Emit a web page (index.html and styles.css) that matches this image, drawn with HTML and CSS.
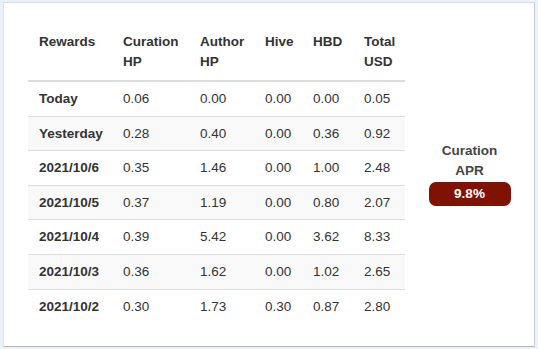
FILE: index.html
```html
<!DOCTYPE html>
<html>
<head>
<meta charset="utf-8">
<link rel="stylesheet" href="styles.css">
</head>
<body>
<div class="card">
  <div class="row">
    <table class="rewards">
      <colgroup>
        <col class="c1"><col class="c2"><col class="c3"><col class="c4"><col class="c5"><col class="c6">
      </colgroup>
      <thead>
        <tr><th>Rewards</th><th>Curation HP</th><th>Author HP</th><th>Hive</th><th>HBD</th><th>Total USD</th></tr>
      </thead>
      <tbody>
        <tr><th>Today</th><td>0.06</td><td>0.00</td><td>0.00</td><td>0.00</td><td>0.05</td></tr>
        <tr><th>Yesterday</th><td>0.28</td><td>0.40</td><td>0.00</td><td>0.36</td><td>0.92</td></tr>
        <tr><th>2021/10/6</th><td>0.35</td><td>1.46</td><td>0.00</td><td>1.00</td><td>2.48</td></tr>
        <tr><th>2021/10/5</th><td>0.37</td><td>1.19</td><td>0.00</td><td>0.80</td><td>2.07</td></tr>
        <tr><th>2021/10/4</th><td>0.39</td><td>5.42</td><td>0.00</td><td>3.62</td><td>8.33</td></tr>
        <tr><th>2021/10/3</th><td>0.36</td><td>1.62</td><td>0.00</td><td>1.02</td><td>2.65</td></tr>
        <tr><th>2021/10/2</th><td>0.30</td><td>1.73</td><td>0.30</td><td>0.87</td><td>2.80</td></tr>
      </tbody>
    </table>
    <div class="apr">
      <div class="apr-label">Curation<br>APR</div>
      <div class="apr-badge">9.8%</div>
    </div>
  </div>
</div>
</body>
</html>
```

FILE: styles.css
```css
html, body {
  margin: 0;
  padding: 0;
  background: #eaf1f9;
}
body {
  padding: 2px 0 0 3px;
  font-family: "Liberation Sans", Arial, sans-serif;
  font-size: 13.5px;
  color: #333;
}
.card {
  box-sizing: border-box;
  width: 532px;
  height: 345px;
  background: #fff;
  border-top: 1px solid #d6dde5;
  border-left: 1px solid #e6e0e0;
  border-right: 1px solid #c9ced4;
  border-bottom: 1px solid #b5b5b5;
  padding: 21px 0 0 24px;
}
.row {
  display: flex;
  align-items: center;
}
.rewards {
  width: 377px;
  flex: none;
  table-layout: fixed;
  border-collapse: collapse;
  border-spacing: 0;
}
.c1 { width: 84px; }
.c2 { width: 77px; }
.c3 { width: 65px; }
.c4 { width: 48px; }
.c5 { width: 51px; }
.c6 { width: 52px; }
.rewards th, .rewards td {
  text-align: left;
  padding: 7px 0 7px 11px;
  line-height: 19.6px;
  vertical-align: middle;
}
.rewards th { font-weight: bold; }
.rewards thead th {
  line-height: 20px;
  padding: 8px 0 8px 11px;
  vertical-align: top;
  border-bottom: 2px solid #ddd;
}
.rewards tbody tr { border-top: 1px solid #ddd; }
.rewards tbody tr:first-child { border-top: 0; }
.rewards tbody tr:nth-child(even) { background: #f9f9f9; }
.apr {
  flex: 1;
  display: flex;
  flex-direction: column;
  align-items: center;
}
.apr-label {
  font-weight: bold;
  color: #444;
  text-align: center;
  line-height: 20px;
}
.apr-badge {
  margin-top: 1px;
  width: 82px;
  height: 24px;
  line-height: 24px;
  border-radius: 7px;
  background: #7f1200;
  color: #fff;
  font-weight: bold;
  text-align: center;
}
```
